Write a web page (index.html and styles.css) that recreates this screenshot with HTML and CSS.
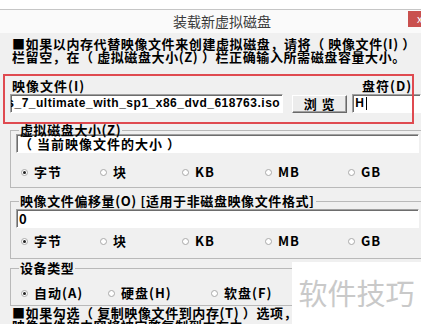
FILE: index.html
```html
<!DOCTYPE html>
<html lang="zh">
<head>
	<meta charset="utf-8">
	<title>装载新虚拟磁盘</title>
	<link rel="stylesheet" href="styles.css">
</head>
<body>
	<div class="window">
		<div class="titlebar">
			<span class="title">装载新虚拟磁盘</span>
			<span class="close">x</span>
		</div>
		<div class="client">
			<p class="notice">■如果以内存代替映像文件来创建虚拟磁盘，请将（ 映像文件(I) ）<br>栏留空，在（ 虚拟磁盘大小(Z) ）栏正确输入所需磁盘容量大小。</p>

			<div class="file-head">
				<span>映像文件(I)</span>
				<span class="drive-label">盘符(D)</span>
			</div>
			<div class="file-row">
				<div class="field file-field"><span>cn_windows_7_ultimate_with_sp1_x86_dvd_618763.iso</span></div>
				<button class="btn">浏 览</button>
				<div class="field drive-field">H<span class="caret"></span></div>
			</div>

			<fieldset class="group size-group">
				<legend>虚拟磁盘大小(Z)</legend>
				<div class="field wide">（ 当前映像文件的大小 ）</div>
				<div class="units">
					<label class="radio"><i class="dot on"></i>字节</label>
					<label class="radio"><i class="dot"></i>块</label>
					<label class="radio"><i class="dot"></i>KB</label>
					<label class="radio"><i class="dot"></i>MB</label>
					<label class="radio"><i class="dot"></i>GB</label>
				</div>
			</fieldset>

			<fieldset class="group offset-group">
				<legend>映像文件偏移量(O) [适用于非磁盘映像文件格式]</legend>
				<div class="field wide">0</div>
				<div class="units">
					<label class="radio"><i class="dot on"></i>字节</label>
					<label class="radio"><i class="dot"></i>块</label>
					<label class="radio"><i class="dot"></i>KB</label>
					<label class="radio"><i class="dot"></i>MB</label>
					<label class="radio"><i class="dot"></i>GB</label>
				</div>
			</fieldset>

			<fieldset class="group type-group">
				<legend>设备类型</legend>
				<div class="types">
					<label class="radio"><i class="dot on"></i>自动(A)</label>
					<label class="radio"><i class="dot"></i>硬盘(H)</label>
					<label class="radio"><i class="dot"></i>软盘(F)</label>
				</div>
			</fieldset>

			<p class="notice">■如果勾选（ 复制映像文件到内存(T) ）选项，<br>映像文件的内容将被完整复制到内存中。</p>
		</div>
	</div>

	<!-- 标注框和水印 -->
	<div class="mark"></div>
	<div class="watermark">软件技巧</div>
</body>
</html>
```

FILE: styles.css
```css
html, body{
	margin: 0;
}
body{
	position: relative;
	width: 421px;
	height: 324px;
	overflow: hidden;
	background: #fff;
	font: bold 13px/14px "Noto Sans CJK SC", sans-serif;
	color: #000;
}
.window{
	margin-top: 9px;
	border-top: 1px solid #c6c6c6;
}
.titlebar{
	position: relative;
	height: 23px;
	padding-left: 23px;
	background: #fafafa;
	text-align: center;
	font: 14px/23px "Noto Sans CJK SC", sans-serif;
	color: #3a3a3a;
}
.close{
	position: absolute;
	right: 0;
	top: 1px;
	width: 13px;
	height: 16px;
	background: #c9504e;
	color: #fff;
	font-size: 11px;
	line-height: 15px;
	text-indent: 9px;
	overflow: hidden;
}
.client{
	height: 300px;
	padding-top: 4px;
	background: #f0f0f0;
	overflow: hidden;
}
.notice{
	margin: 0;
	padding-left: 12px;
	line-height: 13px;
	letter-spacing: 0.6px;
	white-space: nowrap;
}
.file-head{
	display: flex;
	margin-top: 16px;
	padding-left: 12px;
	letter-spacing: 1px;
}
.drive-label{
	margin-left: auto;
	width: 59px;
}
.file-row{
	display: flex;
	align-items: flex-start;
	margin-top: 1px;
	padding-left: 10px;
}
.field{
	box-sizing: border-box;
	height: 19px;
	padding-left: 2px;
	background: #fff;
	border: 1px solid;
	border-color: #a0a0a0 #fff #fff #a0a0a0;
	box-shadow: inset 1px 1px 0 #6d6d6d;
	line-height: 17px;
	white-space: nowrap;
	overflow: hidden;
	letter-spacing: 1px;
}
.file-field{
	display: flex;
	justify-content: flex-end;
	width: 278px;
	padding-right: 2px;
	font: bold 12px/17px "Liberation Sans", sans-serif;
	letter-spacing: 0.5px;
}
.file-field span{
	flex-shrink: 0;
}
.btn{
	box-sizing: border-box;
	width: 56px;
	height: 18px;
	margin: 1px 0 0 9px;
	padding: 0;
	background: #ececec;
	border: 1px solid;
	border-color: #fff #696969 #696969 #fff;
	box-shadow: inset -1px -1px 0 #a0a0a0;
	font: bold 13px/14px "Noto Sans CJK SC", sans-serif;
	color: #000;
	letter-spacing: 1px;
}
.drive-field{
	display: flex;
	align-items: center;
	width: 70px;
	margin-left: 5px;
	font: bold 12px/17px "Liberation Sans", sans-serif;
}
.caret{
	width: 1px;
	height: 13px;
	margin-left: 1px;
	background: #000;
}
.group{
	min-width: 0;
	margin: 0 -12px 0 10px;
	padding: 0 0 5px 6px;
	border: 1px solid #b9b9b9;
}
.group legend{
	margin-left: 2px;
	padding: 0 1px;
	line-height: 8px;
	letter-spacing: 0.6px;
	white-space: nowrap;
}
.size-group{
	margin-top: 13px;
}
.offset-group{
	margin-top: 9px;
	padding-bottom: 7px;
}
.type-group{
	margin-top: 5px;
	padding-bottom: 2px;
}
.wide{
	width: 403px;
	margin-left: -1px;
}
.offset-group .wide{
	margin-top: 4px;
}
.units, .types{
	display: grid;
	align-items: center;
	height: 20px;
	padding-left: 4px;
}
.units{
	grid-template-columns: 79px 82px 83px 83px auto;
	margin-top: 9px;
}
.offset-group .units{
	margin-top: 3px;
}
.types{
	grid-template-columns: 87px 103px auto;
	margin-top: 11px;
}
.radio{
	display: flex;
	align-items: center;
	letter-spacing: 1px;
}
.dot{
	position: relative;
	width: 5px;
	height: 5px;
	margin-right: 6px;
	background: #fff;
	border: 1px solid #a9a9a9;
	border-radius: 50%;
}
.dot.on:after{
	content: "";
	position: absolute;
	left: 1px;
	top: 1px;
	width: 3px;
	height: 3px;
	border-radius: 50%;
	background: #222;
}
.mark{
	position: absolute;
	left: 3px;
	top: 74px;
	width: 411px;
	height: 50px;
	box-sizing: border-box;
	border: 2px solid #df4a50;
}
.watermark{
	position: absolute;
	left: 292px;
	top: 262px;
	width: 129px;
	height: 62px;
	background: #fff;
	font: 29px/60px "Noto Sans CJK SC", sans-serif;
	color: #c9c9c9;
	text-align: center;
}
```
